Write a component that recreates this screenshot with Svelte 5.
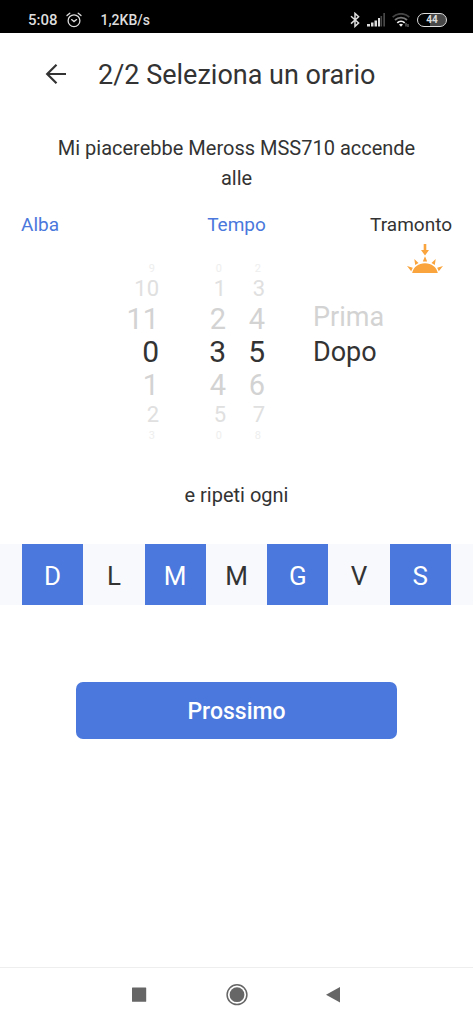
<script>
  const offsets = [-3, -2, -1, 0, 1, 2, 3];
  let wheels = $state([
    { label: 'Ore', size: 12, value: 0 },
    { label: 'Decine di minuti', size: 6, value: 3 },
    { label: 'Minuti', size: 10, value: 5 }
  ]);
  let relation = $state('Dopo');
  let mode = $state('Tramonto');
  let days = $state([
    { name: 'Domenica', on: true },
    { name: 'Lunedì', on: false },
    { name: 'Martedì', on: true },
    { name: 'Mercoledì', on: false },
    { name: 'Giovedì', on: true },
    { name: 'Venerdì', on: false },
    { name: 'Sabato', on: true }
  ]);
  const at = (wheel, offset) => (wheel.value + offset + wheel.size) % wheel.size;
</script>

<div class="screen">
  <div class="status">
    <span class="time">5:08</span>
    <svg class="alarm" width="16" height="16" viewBox="0 0 16 16" fill="none" stroke="#ddd" stroke-width="1.3" stroke-linecap="round">
      <circle cx="8" cy="8.7" r="5.9" /><path d="M1 3.6 3.8 1.2M15 3.6 12.2 1.2M5.6 7.6 8 9.6 10.6 7.6" />
    </svg>
    <span class="speed">1,2KB/s</span>
    <svg class="bt" width="10" height="16" viewBox="0 0 10 16" fill="none" stroke="#ddd" stroke-width="1.5">
      <path d="M1 4.3 8.6 11 5 14.4V1.4L8.6 4.8 1 11.6" />
    </svg>
    <svg class="signal" width="18" height="14" viewBox="0 0 18 14">
      <path fill="#ddd" d="M0 11h3v2.500H0zM4 9.500h2.500v4H4zM7.500 7.500H10v6H7.500zM11 5h2v8.500h-2z" />
      <path fill="#484848" d="M13.500 3h1.600v10.500h-1.600zM16.300 0H18v13.500h-1.700z" />
    </svg>
    <svg class="wifi" width="18" height="14" viewBox="0 0 18 14" fill="none" stroke-width="1.8">
      <path stroke="#444" d="M.7 4.200a11.800 11.800 0 0 1 16.600 0" />
      <path stroke="#777" d="M3 7a8.600 8.600 0 0 1 12 0" />
      <path stroke="#eee" d="M5.300 9.800a5.400 5.400 0 0 1 7.400 0" />
      <path fill="#eee" d="M7 11.600a3 3 0 0 1 4 0L9 13.700z" />
      <path stroke="#888" stroke-width="1" d="M14 10v3.500M16 11v3" />
    </svg>
    <span class="battery">44</span>
  </div>

  <header>
    <button class="back" aria-label="Indietro">
      <svg width="22" height="22" viewBox="0 0 22 22" fill="none" stroke="#333" stroke-width="2.2">
        <path d="M22 10H3.500M12.500 .8 3.200 10l9.300 9.200" />
      </svg>
    </button>
    <h1>2/2 Seleziona un orario</h1>
  </header>

  <main>
    <p class="intro">Mi piacerebbe Meross MSS710 accende alle</p>

    <div class="modes">
      {#each ['Alba', 'Tempo', 'Tramonto'] as name}
        <button class:current={mode === name} aria-pressed={mode === name} onclick={() => (mode = name)}>
          {name}
          {#if mode === name}
            <svg class="sun" width="36" height="30" viewBox="0 0 36 30" fill="#f9a43c">
              <path d="M16.700 0h2.600v6h2.700L18 11.500 14 6h2.700zM5.200 29c1-6 6.400-9.800 12.800-9.800S29.800 23 30.800 29zM18 12.300l2.200 5.200h-4.400zM7.300 15l4.200 3.900-3.300 2.200zM28.700 15l-.9 6.100-3.300-2.200zM0 22l5.800 1.800-1.600 3.400zM36 22l-4.200 5.200-1.600-3.400z" />
            </svg>
          {/if}
        </button>
      {/each}
    </div>

    <div class="picker">
      {#each wheels as wheel}
        <div class="wheel" role="group" aria-label={wheel.label}>
          {#each offsets as offset}
            <button class="d{Math.abs(offset)}" onclick={() => (wheel.value = at(wheel, offset))}>{at(wheel, offset)}</button>
          {/each}
        </div>
      {/each}
      <div class="relation" role="group" aria-label="Prima o dopo">
        {#each ['Prima', 'Dopo'] as name}
          <button class:chosen={relation === name} aria-pressed={relation === name} onclick={() => (relation = name)}>{name}</button>
        {/each}
      </div>
    </div>

    <p class="repeat">e ripeti ogni</p>

    <div class="days">
      {#each days as day}
        <button class:on={day.on} aria-pressed={day.on} title={day.name} onclick={() => (day.on = !day.on)}>{day.name[0]}</button>
      {/each}
    </div>

    <button class="next">Prossimo</button>
  </main>

  <nav>
    <button aria-label="App recenti">
      <svg width="24" height="24" viewBox="0 0 24 24" fill="#666"><rect x="4" y="3.500" width="14.200" height="14.200" rx=".5" /></svg>
    </button>
    <button aria-label="Home">
      <svg width="24" height="24" viewBox="0 0 24 24" fill="#666"><circle cx="12" cy="10.700" r="7.400" /><circle cx="12" cy="10.700" r="9.900" fill="none" stroke="#666" stroke-width="1.500" /></svg>
    </button>
    <button aria-label="Indietro">
      <svg width="24" height="24" viewBox="0 0 24 24" fill="#666"><path d="M18 2.900v15.600L4 10.700z" /></svg>
    </button>
  </nav>
</div>

<style>
  :global(body) { margin: 0; background: #fff; }
  .screen {
    min-height: 100vh;
    display: flex;
    flex-direction: column;
    font-family: Roboto, sans-serif;
    color: #333;
  }
  button {
    font: inherit;
    color: inherit;
    background: none;
    border: 0;
    padding: 0;
    cursor: pointer;
  }
  svg { display: block; }
  h1, p { margin: 0; font-weight: 400; }

  .status {
    display: flex;
    align-items: center;
    height: 33px;
    padding: 6px 26px 0 28px;
    box-sizing: border-box;
    background: #000;
    color: #ddd;
    font-size: 14px;
    font-weight: 500;
  }
  .time { font-size: 15px; }
  .alarm { margin-left: 8px; }
  .speed { margin-left: 19px; }
  .bt { margin-left: auto; }
  .signal { margin-left: 7px; }
  .wifi { margin-left: 7px; }
  .battery {
    width: 30px;
    height: 14px;
    margin-left: 7px;
    border: 1px solid #ddd;
    border-radius: 7px;
    box-sizing: border-box;
    background: linear-gradient(90deg, #000 44%, #484848 44%);
    font-size: 10px;
    font-weight: 700;
    line-height: 12px;
    text-align: center;
  }

  header {
    display: flex;
    align-items: center;
    gap: 32px;
    height: 84px;
    padding-left: 44px;
  }
  h1 { font-size: 27px; line-height: 36px; }

  main { flex: 1; display: flex; flex-direction: column; }
  .intro {
    padding: 16px 50px 0;
    font-size: 20px;
    line-height: 30px;
    text-align: center;
  }
  .modes {
    display: grid;
    grid-template-columns: 1fr 1fr 1fr;
    padding: 17px 21px 0;
    font-size: 19px;
    line-height: 30px;
    color: #4a78dc;
  }
  .modes button { position: relative; }
  .modes button:first-child { justify-self: start; }
  .modes button:last-child { justify-self: end; }
  .modes .current { color: #333; }
  .sun { position: absolute; top: 34px; right: 9px; }

  .picker {
    display: grid;
    grid-template-columns: 159fr 67fr 39fr 208fr;
    align-items: center;
    padding-top: 22px;
  }
  .wheel { display: flex; flex-direction: column; align-items: flex-end; }
  .wheel button { text-align: right; }
  .d0 { height: 34px; font-size: 30px; line-height: 34px; }
  .d1 { height: 32px; font-size: 29px; line-height: 32px; color: #d3d3d3; }
  .d2 { height: 28px; font-size: 22px; line-height: 28px; color: #e0e0e0; }
  .d3 { height: 13px; font-size: 11px; line-height: 13px; }
  .wheel .d3 { padding-right: 4px; color: #eee; }
  .relation {
    display: flex;
    flex-direction: column;
    align-items: flex-start;
    padding: 0 0 35px 48px;
    font-size: 27px;
    line-height: 35px;
    color: #d3d3d3;
  }
  .relation .chosen { color: #333; }

  .repeat { padding-top: 38px; font-size: 20px; line-height: 30px; text-align: center; }
  .days {
    display: flex;
    margin-top: 34px;
    padding: 0 22px;
    background: #f7f9fc;
    font-size: 26px;
  }
  .days button { flex: 1; height: 61px; padding-top: 2px; }
  .days .on { background: #4a78dc; color: #fff; }
  .next {
    align-self: center;
    width: 68%;
    height: 57px;
    margin: 77px 0 40px;
    padding-top: 2px;
    border-radius: 7px;
    background: #4a78dc;
    color: #fff;
    font-size: 23px;
    font-weight: 500;
  }

  nav {
    display: flex;
    justify-content: center;
    gap: 73px;
    height: 56px;
    border-top: 1px solid #eee;
  }
</style>
